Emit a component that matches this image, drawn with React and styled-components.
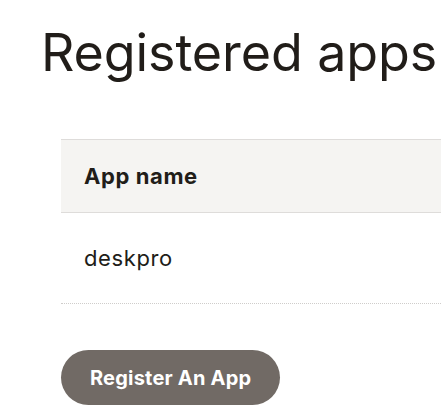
import React from 'react'
import styled, { createGlobalStyle } from 'styled-components'

const GlobalStyle = createGlobalStyle`
  html, body {
    margin: 0;
    padding: 0;
    background: #ffffff;
    overflow: hidden;
  }
  body {
    font-family: Inter, "Noto Sans", sans-serif;
    color: #211d19;
  }
`;

const Page = styled.div`
  width: 640px;
  padding: 20px 0 0 41px;
`;

const Title = styled.h1`
  margin: 0 0 53px 0;
  font-size: 52px;
  font-weight: 400;
  line-height: 66px;
  letter-spacing: -0.1px;
  color: #211d19;
`;

const Section = styled.div`
  padding-left: 20px;
`;

const Table = styled.table`
  width: 100%;
  border-collapse: collapse;
  font-size: 22px;
  letter-spacing: 0.6px;
`;

const HeadCell = styled.th`
  text-align: left;
  font-weight: 700;
  height: 72px;
  padding: 0 23px;
  background: #f5f4f2;
  border-top: 1px solid #dedcda;
  border-bottom: 1px solid #dedcda;
`;

const Cell = styled.td`
  height: 90px;
  padding: 0 23px;
  border-bottom: 1px dotted #cfcdcb;
`;

const Button = styled.button`
  margin-top: 46px;
  height: 55px;
  padding: 0 29px;
  border: none;
  border-radius: 28px;
  background: #716a65;
  color: #ffffff;
  font-family: Inter, "Noto Sans", sans-serif;
  font-size: 20px;
  font-weight: 700;
  letter-spacing: 0.2px;
  cursor: pointer;
`;

const App = () => {
  return (
    <Page>
      <GlobalStyle />
      <Title>Registered apps</Title>
      <Section>
        <Table>
          <thead>
            <tr>
              <HeadCell>App name</HeadCell>
            </tr>
          </thead>
          <tbody>
            <tr>
              <Cell>deskpro</Cell>
            </tr>
          </tbody>
        </Table>
        <Button>Register An App</Button>
      </Section>
    </Page>
  )
}

export default App
